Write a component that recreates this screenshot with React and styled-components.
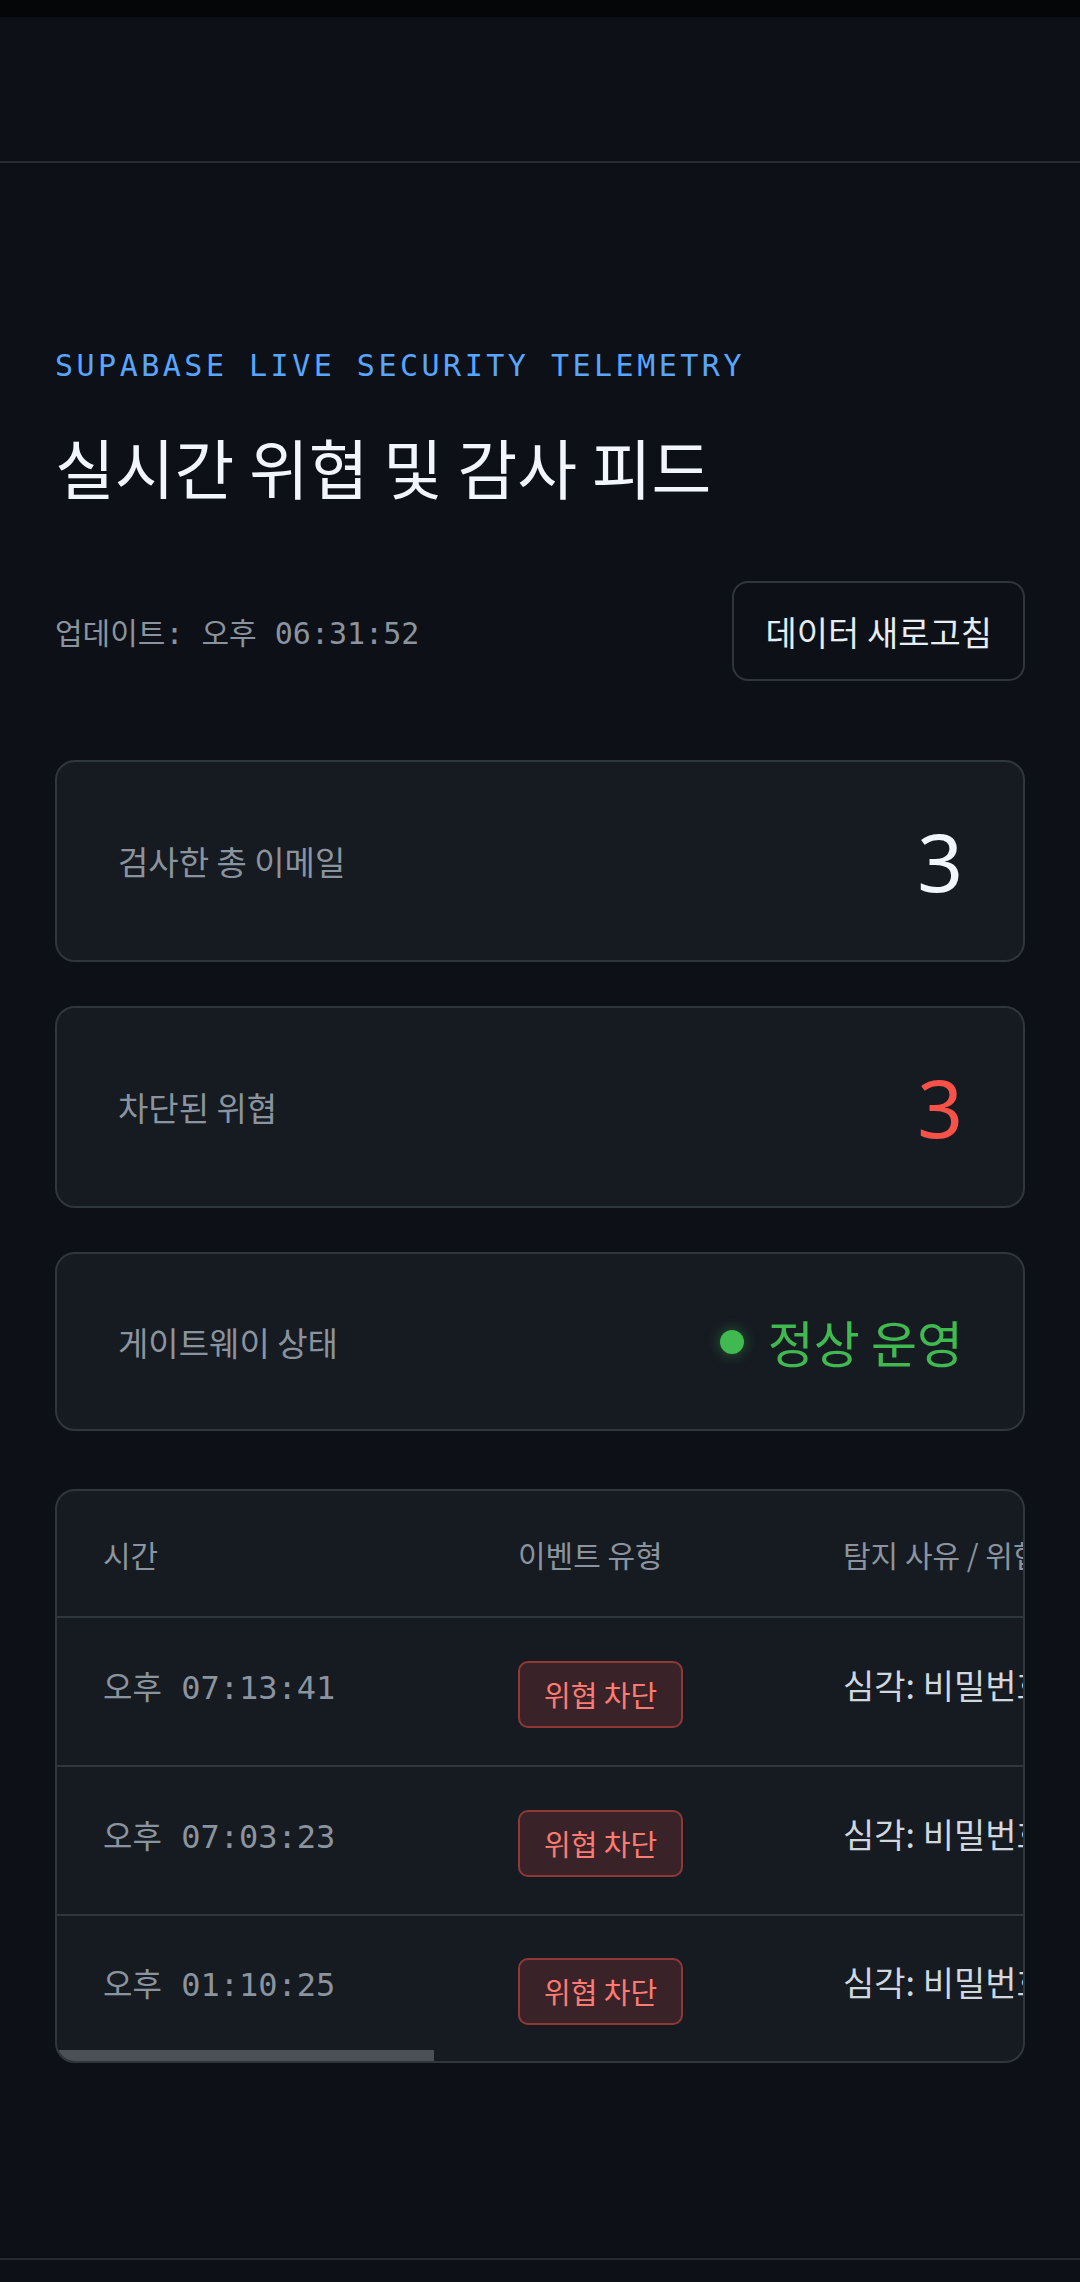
import React from "react";
import styled, { createGlobalStyle } from "styled-components";

const GlobalStyle = createGlobalStyle`
  *, *::before, *::after { box-sizing: border-box; }
  html, body { margin: 0; padding: 0; background: #0d1117; }
  body {
    font-family: "Noto Sans CJK KR", "Noto Sans", sans-serif;
    color: #e6edf3;
  }
`;

const MONO = `"DejaVu Sans Mono", "Noto Sans CJK KR", monospace`;

const Page = styled.div`
  min-height: 2282px;
  background: #0d1117;
  display: flex;
  flex-direction: column;
`;

const StatusStrip = styled.div`
  height: 17px;
  background: #050608;
`;

const TopBar = styled.header`
  height: 146px;
  border-bottom: 2px solid #272b33;
  background: #0d1117;
`;

const Main = styled.main`
  padding: 182px 55px 195px;
  display: flex;
  flex-direction: column;
`;

const Eyebrow = styled.div`
  font-family: ${MONO};
  font-size: 30px;
  line-height: 42px;
  letter-spacing: 3.5px;
  color: #58a6ff;
  white-space: nowrap;
`;

const Title = styled.h1`
  margin: 43px 0 0;
  font-size: 65px;
  line-height: 72px;
  font-weight: 400;
  color: #f0f6fc;
`;

const MetaRow = styled.div`
  margin-top: 79px;
  display: flex;
  align-items: center;
  justify-content: space-between;
`;

const Updated = styled.span`
  font-family: ${MONO};
  font-size: 30px;
  color: #8b949e;
  white-space: pre;
`;

const RefreshButton = styled.button`
  height: 100px;
  padding: 0 31px;
  background: transparent;
  border: 2px solid #30363d;
  border-radius: 16px;
  color: #e6edf3;
  font-family: "Noto Sans CJK KR", sans-serif;
  font-size: 34px;
  font-weight: 400;
  cursor: pointer;
`;

const Stats = styled.div`
  margin-top: 79px;
  display: flex;
  flex-direction: column;
  gap: 44px;
`;

const StatCard = styled.div`
  display: flex;
  align-items: center;
  justify-content: space-between;
  padding: 51px 60px 51px 61px;
  background: #161b22;
  border: 2px solid #30363d;
  border-radius: 20px;
`;

const StatLabel = styled.span`
  font-size: 33px;
  color: #8b949e;
`;

const StatValue = styled.span`
  font-family: "Noto Sans", "Noto Sans CJK KR", sans-serif;
  font-size: 80px;
  line-height: 96px;
  color: ${(p) => (p.$tone === "danger" ? "#f85149" : "#f0f6fc")};
`;

const Status = styled.span`
  display: flex;
  align-items: center;
  gap: 24px;
  font-size: 50px;
  line-height: 73px;
  color: #3fb950;
`;

const StatusDot = styled.span`
  width: 24px;
  height: 24px;
  border-radius: 50%;
  background: #3fb950;
  box-shadow: 0 0 14px rgba(63, 185, 80, 0.45);
`;

const TableCard = styled.div`
  position: relative;
  margin-top: 58px;
  background: #161b22;
  border: 2px solid #30363d;
  border-radius: 20px;
  overflow: hidden;
`;

const Scroller = styled.div`
  overflow-x: auto;
  scrollbar-width: none;
  &::-webkit-scrollbar { display: none; }
`;

const Table = styled.table`
  width: 2475px;
  table-layout: fixed;
  border-collapse: separate;
  border-spacing: 0;
`;

const HeadRow = styled.tr`
  height: 127px;
`;

const BodyRow = styled.tr`
  height: ${(p) => (p.$last ? "145px" : "149px")};
`;

const Th = styled.th`
  padding: 0 46px;
  text-align: left;
  font-weight: 400;
  font-size: 30px;
  color: #8b949e;
  white-space: nowrap;
  border-bottom: 2px solid #30363d;
  vertical-align: middle;
`;

const Td = styled.td`
  padding: ${(p) => (p.$badge ? "5px 46px 0" : "0 46px 14px")};
  white-space: nowrap;
  vertical-align: middle;
  border-bottom: ${(p) => (p.$last ? "none" : "2px solid #30363d")};
`;

const TimeText = styled.span`
  font-family: ${MONO};
  font-size: 32px;
  color: #8b949e;
  white-space: pre;
`;

const Badge = styled.span`
  display: inline-flex;
  align-items: center;
  vertical-align: middle;
  height: 67px;
  padding: 0 24px;
  border: 2px solid rgba(248, 81, 73, 0.45);
  border-radius: 10px;
  background: rgba(248, 81, 73, 0.16);
  color: #ff7b72;
  font-size: 29px;
`;

const ReasonText = styled.span`
  font-size: 34px;
  color: #d0d7de;
`;

const ScrollThumb = styled.div`
  position: absolute;
  left: 0;
  bottom: 0;
  width: 377px;
  height: 11px;
  background: #4b5057;
`;

const Footer = styled.footer`
  flex: 1;
  border-top: 2px solid #252930;
`;

const rows = [
  { time: "오후 07:13:41", reason: "심각: 비밀번호 재설정을 가장한 피싱 링크 탐지", from: "security-alert@secure-login.co" },
  { time: "오후 07:03:23", reason: "심각: 비밀번호 유출 의심 첨부파일 차단", from: "admin@account-verify.net" },
  { time: "오후 01:10:25", reason: "심각: 비밀번호 탈취 시도 도메인 위장 메일", from: "no-reply@supabase-auth.io" },
];

export default function App() {
  return (
    <>
      <GlobalStyle />
      <Page>
        <StatusStrip />
        <TopBar />
        <Main>
          <Eyebrow>SUPABASE LIVE SECURITY TELEMETRY</Eyebrow>
          <Title>실시간 위협 및 감사 피드</Title>
          <MetaRow>
            <Updated>업데이트: 오후 06:31:52</Updated>
            <RefreshButton>데이터 새로고침</RefreshButton>
          </MetaRow>
          <Stats>
            <StatCard>
              <StatLabel>검사한 총 이메일</StatLabel>
              <StatValue>3</StatValue>
            </StatCard>
            <StatCard>
              <StatLabel>차단된 위협</StatLabel>
              <StatValue $tone="danger">3</StatValue>
            </StatCard>
            <StatCard>
              <StatLabel>게이트웨이 상태</StatLabel>
              <Status>
                <StatusDot />
                정상 운영
              </Status>
            </StatCard>
          </Stats>
          <TableCard>
            <Scroller>
              <Table>
                <colgroup>
                  <col style={{ width: 415 }} />
                  <col style={{ width: 325 }} />
                  <col style={{ width: 900 }} />
                  <col style={{ width: 835 }} />
                </colgroup>
                <thead>
                  <HeadRow>
                    <Th>시간</Th>
                    <Th>이벤트 유형</Th>
                    <Th>탐지 사유 / 위협 내용</Th>
                    <Th>발신자</Th>
                  </HeadRow>
                </thead>
                <tbody>
                  {rows.map((r, i) => {
                    const last = i === rows.length - 1;
                    return (
                      <BodyRow key={r.time} $last={last}>
                        <Td $last={last}>
                          <TimeText>{r.time}</TimeText>
                        </Td>
                        <Td $last={last} $badge>
                          <Badge>위협 차단</Badge>
                        </Td>
                        <Td $last={last}>
                          <ReasonText>{r.reason}</ReasonText>
                        </Td>
                        <Td $last={last}>
                          <TimeText>{r.from}</TimeText>
                        </Td>
                      </BodyRow>
                    );
                  })}
                </tbody>
              </Table>
            </Scroller>
            <ScrollThumb />
          </TableCard>
        </Main>
        <Footer />
      </Page>
    </>
  );
}
